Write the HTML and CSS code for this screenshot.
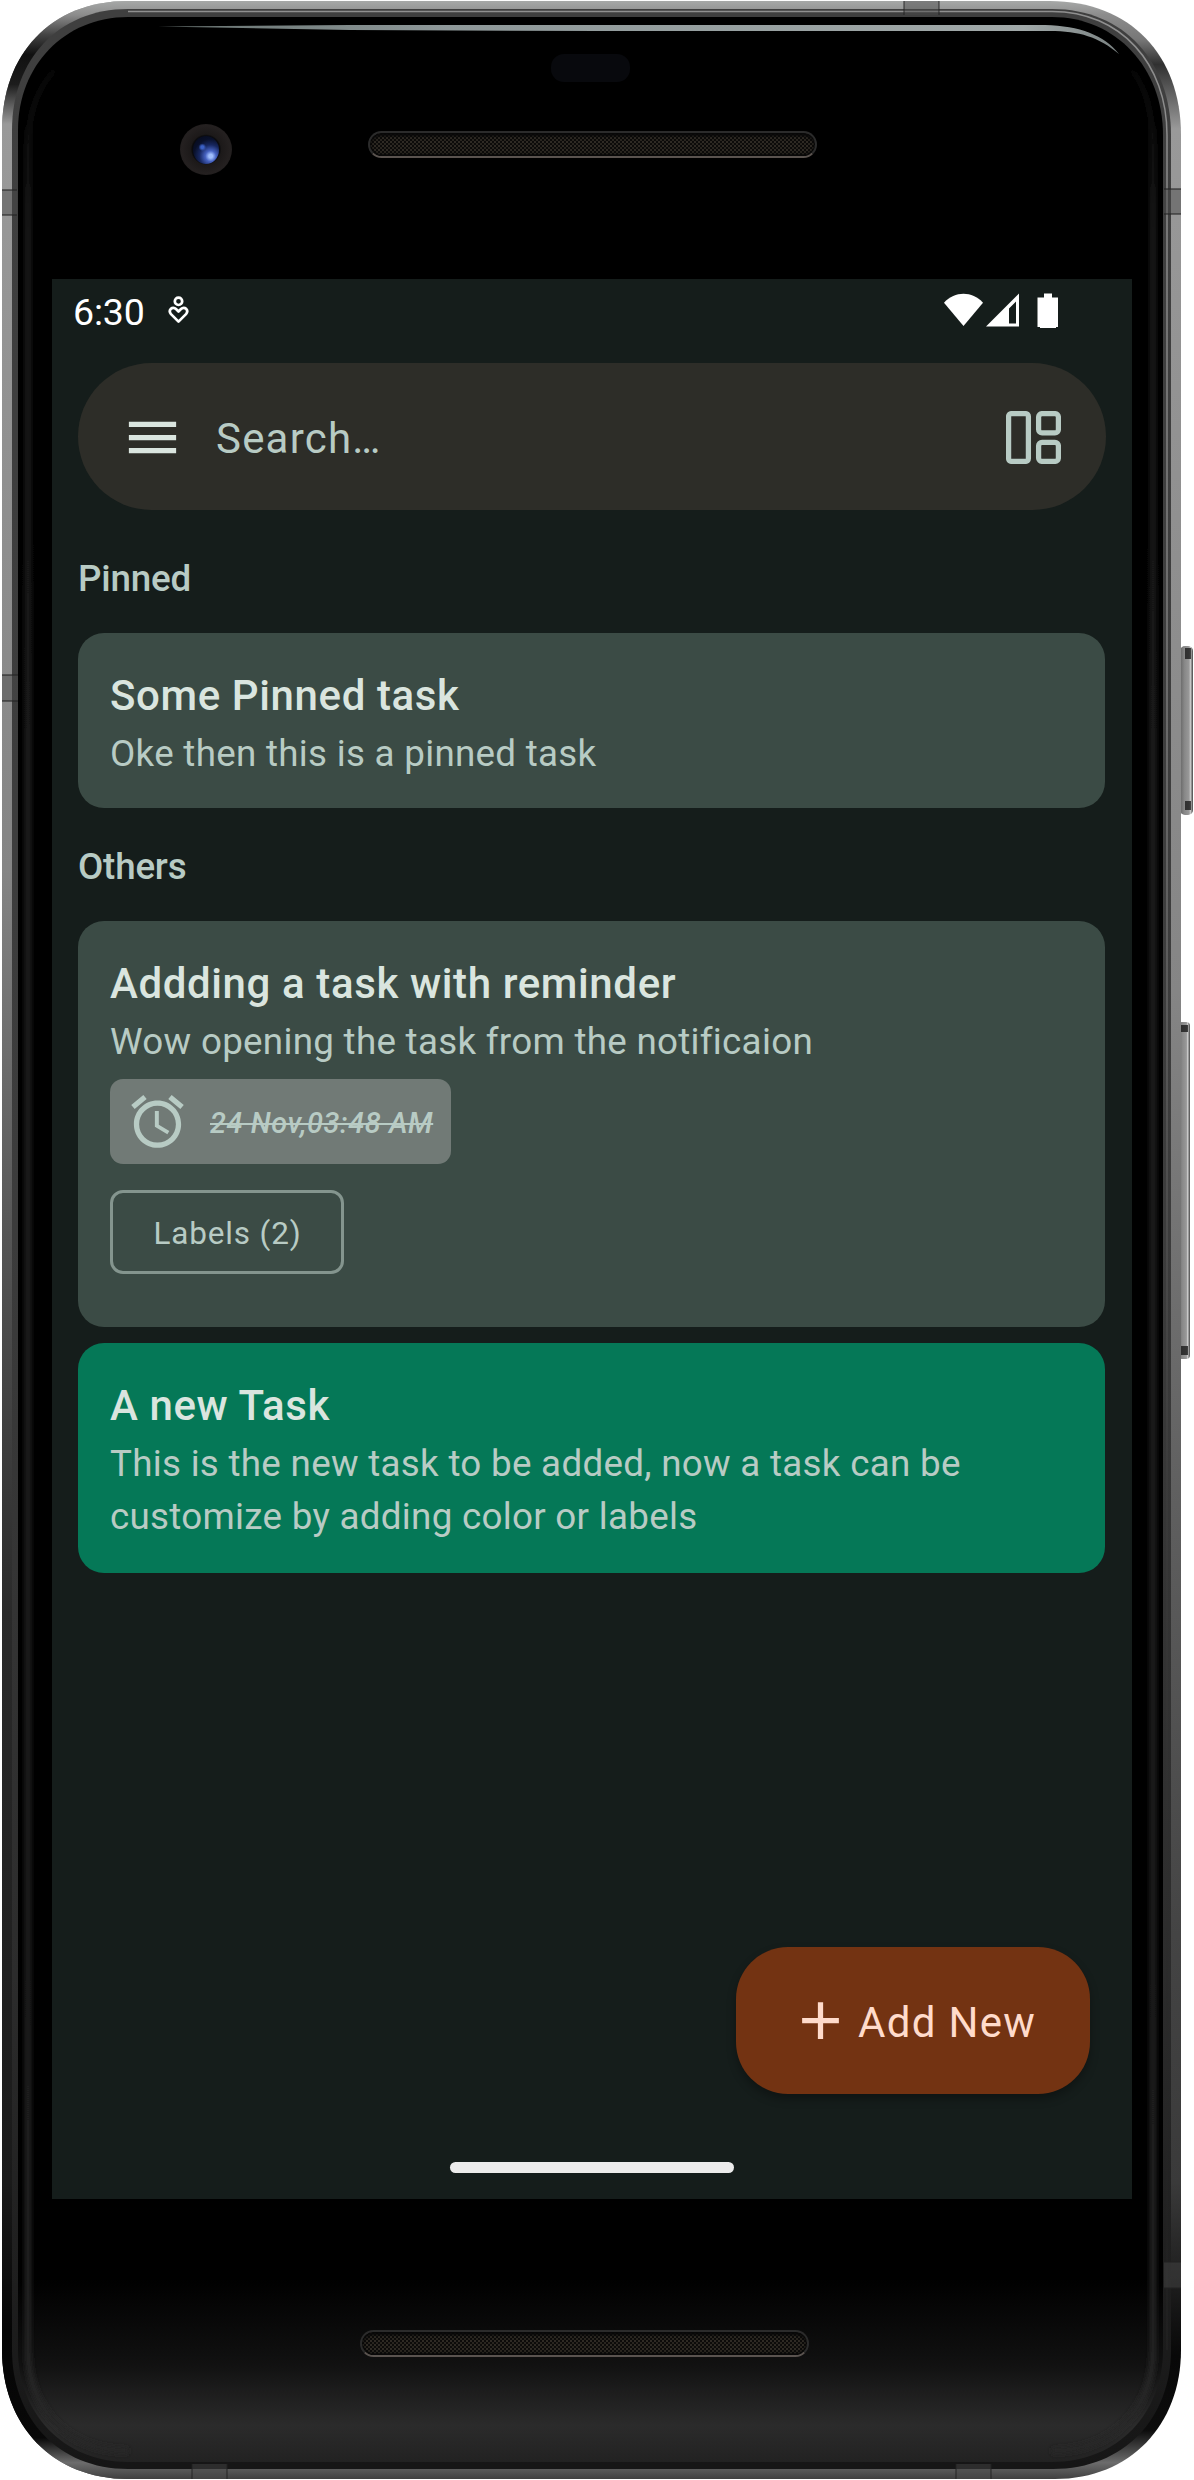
FILE: index.html
```html
<!DOCTYPE html>
<html lang="en">
<head>
<meta charset="utf-8">
<title>Tasks</title>
<link rel="stylesheet" href="styles.css">
</head>
<body>
<div class="device">
  <svg class="shell" viewBox="0 0 1194 2480" aria-hidden="true">
    <defs>
      <linearGradient id="metal" x1="0" y1="0" x2="0" y2="2480" gradientUnits="userSpaceOnUse">
        <stop offset="0" stop-color="#a8aaa9"/><stop offset=".006" stop-color="#8c8c8c"/>
        <stop offset=".016" stop-color="#777"/><stop offset=".026" stop-color="#303030"/>
        <stop offset=".036" stop-color="#5a5a5a"/><stop offset=".052" stop-color="#999"/>
        <stop offset=".4" stop-color="#858585"/><stop offset=".6" stop-color="#606060"/>
        <stop offset=".78" stop-color="#444"/><stop offset=".88" stop-color="#3a3a3a"/>
        <stop offset=".95" stop-color="#080808"/><stop offset=".98" stop-color="#0c0c0c"/>
        <stop offset=".993" stop-color="#6c6c6c"/><stop offset="1" stop-color="#3d3d3d"/>
      </linearGradient>
      <linearGradient id="metal-left" x1="0" y1="0" x2="0" y2="2480" gradientUnits="userSpaceOnUse">
        <stop offset="0" stop-color="#a8aaa9"/><stop offset=".006" stop-color="#8c8c8c"/>
        <stop offset=".014" stop-color="#444"/><stop offset=".022" stop-color="#101010"/>
        <stop offset=".034" stop-color="#1c1c1c"/><stop offset=".05" stop-color="#9a9a9a"/>
        <stop offset=".35" stop-color="#858585"/><stop offset=".5" stop-color="#555"/>
        <stop offset=".65" stop-color="#2a2a2a"/><stop offset=".88" stop-color="#1a1a1a"/>
        <stop offset=".94" stop-color="#050505"/><stop offset=".983" stop-color="#080808"/>
        <stop offset=".993" stop-color="#6c6c6c"/><stop offset="1" stop-color="#3d3d3d"/>
      </linearGradient>
      <linearGradient id="rim" x1="0" y1="14" x2="0" y2="2466" gradientUnits="userSpaceOnUse">
        <stop offset="0" stop-color="#3f3f3f"/><stop offset=".5" stop-color="#3c3c3c"/>
        <stop offset=".8" stop-color="#2c2c2c"/><stop offset="1" stop-color="#161616"/>
      </linearGradient>
      <linearGradient id="edge" x1="0" y1="0" x2="0" y2="2480" gradientUnits="userSpaceOnUse">
        <stop offset="0" stop-color="#909090"/><stop offset=".3" stop-color="#777"/>
        <stop offset=".6" stop-color="#3c3c3c"/><stop offset=".9" stop-color="#222"/>
      </linearGradient>
      <linearGradient id="glass" x1="0" y1="0" x2="0" y2="1">
        <stop offset="0" stop-color="#000"/><stop offset=".925" stop-color="#000"/>
        <stop offset=".96" stop-color="#111"/><stop offset=".985" stop-color="#2b2b2b"/><stop offset="1" stop-color="#222"/>
      </linearGradient>
      <linearGradient id="side" x1="0" y1="40" x2="0" y2="2470" gradientUnits="userSpaceOnUse">
        <stop offset="0" stop-color="#1e1e1e" stop-opacity="0"/><stop offset=".08" stop-color="#1e1e1e"/><stop offset="1" stop-color="#262626"/>
      </linearGradient>
      <linearGradient id="button" x1="0" y1="0" x2="1" y2="0">
        <stop offset="0" stop-color="#666"/><stop offset=".35" stop-color="#888"/><stop offset=".7" stop-color="#999"/><stop offset=".8" stop-color="#ccc"/><stop offset="1" stop-color="#444"/>
      </linearGradient>
      <linearGradient id="shine" x1="158" y1="0" x2="1120" y2="0" gradientUnits="userSpaceOnUse">
        <stop offset="0" stop-color="#66716f"/><stop offset=".3" stop-color="#8e9899"/><stop offset=".9" stop-color="#a0a8a8"/><stop offset="1" stop-color="#7a8282"/>
      </linearGradient>
      <filter id="soft" x="-5%" y="-5%" width="110%" height="110%"><feGaussianBlur stdDeviation="2.500"/></filter>
      <clipPath id="left-half"><rect width="597" height="2480"/></clipPath>
    </defs>
    <rect x="1180" y="646" width="13" height="169" rx="5" fill="url(#button)"/>
    <path d="M1185 648h6v11h-6zM1185 801h6v9h-6z" fill="#111" opacity=".75"/>
    <rect x="1178" y="1022" width="12" height="337" rx="4" fill="url(#button)"/>
    <path d="M1181 1025h7v7h-7zM1181 1346h7v9h-7z" fill="#111" opacity=".75"/>
    <path d="M128 1H1050C1130 1 1181 55 1181 135V2350C1181 2425 1130 2479 1055 2479H128C52 2479 2 2425 2 2350V130C2 55 50 1 128 1Z" fill="url(#metal)"/>
    <path clip-path="url(#left-half)" d="M128 1H1050C1130 1 1181 55 1181 135V2350C1181 2425 1130 2479 1055 2479H128C52 2479 2 2425 2 2350V130C2 55 50 1 128 1Z" fill="url(#metal-left)"/>
    <path d="M128 9H1052C1124 9 1171 62 1171 135V2350C1171 2418 1124 2469 1053 2469H128C58 2469 12 2418 12 2350V130C12 60 58 9 128 9Z" fill="url(#rim)"/>
    <path d="M128 11.500H1052C1121 11.500 1167 64 1167 135V2350" fill="none" stroke="url(#edge)" stroke-width="1.500"/>
    <g fill="#4a4a4a" fill-opacity=".45">
      <path d="M2 190H17V215H2ZM2 675H18V701H2ZM1164 189H1181V214H1164ZM1164 2262H1181V2288H1164ZM904 1H939V15H904ZM192 2464H227V2479H192ZM956 2464H991V2479H956Z"/>
    </g>
    <path d="M2 190H17M2 215H17M2 675H18M2 701H18M1164 189H1181M1164 214H1181M1164 2262H1181M1164 2288H1181M904 1V15M939 1V15M192 2464V2479M227 2464V2479M956 2464V2479M991 2464V2479" stroke="#222" stroke-opacity=".7" stroke-width="1.300"/>
    <path d="M128 17H1052C1116 17 1163 68 1163 135V2350C1163 2413 1118 2462 1052 2462H128C63 2462 18 2413 18 2350V130C18 66 64 17 128 17Z" fill="url(#glass)"/>
    <g fill="none" stroke="url(#side)" stroke-width="6" filter="url(#soft)">
      <path d="M80 50C48 70 28 96 28 150V2350C28 2408 66 2450 128 2451"/>
      <path d="M1112 50C1138 70 1153 96 1153 150V2350C1153 2408 1114 2450 1052 2451"/>
    </g>
    <path d="M158 26.500L350 25H1045C1080 26 1104 35 1119 54C1099 37 1079 31 1050 31H600L350 30Z" fill="url(#shine)"/>
  </svg>

  <header class="bezel bezel-top">
    <div class="sensor"></div>
    <div class="camera"><div class="lens"></div></div>
    <div class="speaker"></div>
  </header>

  <main class="screen">
    <div class="status">
      <span class="time">6:30</span>
      <svg class="notify" viewBox="0 0 21 28"><circle cx="10.500" cy="5.300" r="3.700"/><path d="M10.500 25.600L3 18.100C-.3 14.300 4.500 9.500 8 13L10.500 15.500L13 13C16.500 9.500 21.300 14.300 18 18.100Z"/></svg>
      <svg class="signals" viewBox="0 0 116 36">
        <path d="M1 9.700C12 -2.200 29 -2.200 40 9.700L20.500 33Z"/>
        <path fill-rule="evenodd" d="M43 33.500L76 0.500V33.500ZM66 12.500V30.500H73V8.500L66 15.500Z"/>
        <path d="M101 0.500H109V4.500H115V34H113V35H97V34H94.500V4.500H101Z"/>
      </svg>
    </div>

    <div class="search">
      <svg class="icon menu" viewBox="0 0 24 24"><path d="M3 18h18v-2H3v2zm0-5h18v-2H3v2zm0-7v2h18V6H3z"/></svg>
      <span class="placeholder">Search…</span>
      <svg class="layout" viewBox="0 0 55 53"><rect x="2.600" y="2.600" width="19.800" height="47.800" rx="2.800"/><rect x="32.600" y="2.600" width="19.800" height="19.300" rx="3.500"/><rect x="32.600" y="31.300" width="19.800" height="19.100" rx="3.500"/></svg>
    </div>

    <h2 class="section">Pinned</h2>
    <article class="card pinned">
      <h3>Some Pinned task</h3>
      <p>Oke then this is a pinned task</p>
    </article>

    <h2 class="section">Others</h2>
    <article class="card reminder">
      <h3>Addding a task with reminder</h3>
      <p>Wow opening the task from the notificaion</p>
      <div class="chip">
        <svg class="icon" viewBox="0 0 24 24"><path d="M22 5.720l-4.600-3.860-1.290 1.530 4.600 3.860L22 5.720zM7.880 3.390L6.600 1.860 2 5.710l1.290 1.530 4.590-3.850zM12.500 8H11v6l4.750 2.850.75-1.230-4-2.370V8zM12 4c-4.970 0-9 4.030-9 9s4.020 9 9 9c4.970 0 9-4.030 9-9s-4.030-9-9-9zm0 16c-3.870 0-7-3.130-7-7s3.130-7 7-7 7 3.130 7 7-3.130 7-7 7z"/></svg>
        <span>24 Nov,03:48 AM</span>
      </div>
      <div class="labels">Labels (2)</div>
    </article>
    <article class="card colored">
      <h3>A new Task</h3>
      <p>This is the new task to be added, now a task can be customize by adding color or labels</p>
    </article>

    <button class="fab"><svg class="icon" viewBox="0 0 24 24"><path d="M19 13h-6v6h-2v-6H5v-2h6V5h2v6h6v2z"/></svg><span>Add New</span></button>
    <div class="home"></div>
  </main>

  <footer class="bezel bezel-bottom"><div class="speaker"></div></footer>
</div>
</body>
</html>
```
FILE: styles.css
```css
* { box-sizing: border-box; }
body { margin: 0; background: #fff; font-family: Roboto, "Noto Sans", sans-serif; }
h2, h3, p { margin: 0; font-weight: 400; }
svg { display: block; flex: none; }

.device { position: relative; width: 1194px; height: 2480px; padding-left: 52px; overflow: hidden; }
.shell { position: absolute; left: 0; top: 0; width: 1194px; height: 2480px; }

.bezel { position: relative; width: 1080px; }
.bezel-top { height: 279px; display: grid; grid-template-columns: 127px 53px 1fr; grid-template-rows: 82px 41px 1fr; }
.sensor { grid-column: 1 / -1; grid-row: 1; align-self: end; margin-left: 499px; width: 79px; height: 28px; border-radius: 13px; background: #08090d; }
.camera { grid-column: 2; grid-row: 2 / 4; margin: 42px 0 0 1px; width: 52px; height: 51px; border-radius: 50%; background: radial-gradient(circle, #0b0b0d 38%, #1c1919 42%, #242020 66%, #151313); display: grid; place-items: center; }
.lens { width: 26px; height: 28px; border-radius: 50%; background: radial-gradient(circle at 36% 40%, #3b60c4 0 6%, transparent 16%), radial-gradient(circle at 68% 72%, #9fbdfb 0 7%, #4662c0 20%, #17275f 42%, #091029 64%, #050816); }
.speaker { width: 449px; height: 27px; border: 2px solid #2b2b2b; border-bottom-color: #5a534f; border-radius: 14px; background: radial-gradient(circle at 1px 1px, #4a4239 .4px, transparent 1.100px) 0 4px / 4px 4px, radial-gradient(circle at 3px 3px, #403930 .4px, transparent 1.100px) 0 4px / 4px 4px, #0c0b0a; box-shadow: inset 0 3px 3px #080808, inset 0 -2px 2px #080808; }
.bezel-top .speaker { grid-column: 3; grid-row: 3; margin: 8px 0 0 136px; }
.bezel-bottom { height: 281px; padding: 131px 0 0 308px; }

.screen { position: relative; width: 1080px; height: 1920px; background: #151d1b; padding: 0 26px; display: flex; flex-direction: column; align-items: flex-start; }
.status { width: 1028px; height: 84px; display: flex; align-items: flex-start; color: #fff; }
.time { width: 90px; margin-left: -5px; padding-top: 12px; font-size: 37.500px; line-height: 42px; letter-spacing: -.2px; }
.notify { width: 21px; height: 28px; margin: 17px 0 0 5px; fill: none; stroke: #fff; stroke-width: 2.700; stroke-linejoin: round; }
.signals { width: 116px; height: 36px; margin: 14px 47px 0 auto; fill: #fff; }

.search { width: 1028px; height: 147px; border-radius: 74px; background: #2d2d28; display: flex; align-items: center; padding: 2px 45px 0 43px; }
.icon { width: 63px; height: 63px; }
.menu { fill: #dae5df; }
.placeholder { margin: 2px 0 0 32px; font-size: 42px; line-height: 63px; letter-spacing: 1.200px; color: #b8cbc4; }
.layout { width: 55px; height: 53px; margin-left: auto; fill: none; stroke: #b8cbc4; stroke-width: 5.250; }

.section { font-size: 36.750px; font-weight: 500; line-height: 52px; letter-spacing: -.2px; color: #b8cbc4; }
.search + .section { margin: 43px 0 28px; }
.pinned + .section { margin: 33px 0 28px; }

.card { width: 1027px; padding: 31px 32px 0; border-radius: 26px; background: #3b4b45; color: #b8cbc4; }
.card h3 { font-size: 42px; font-weight: 500; line-height: 63px; letter-spacing: .610px; color: #dae5df; }
.card p { margin-top: 1px; font-size: 36.750px; line-height: 52.500px; letter-spacing: .290px; }
.pinned { height: 175px; }
.reminder { height: 406px; }
.colored { height: 230px; margin-top: 16px; background: #057857; }
.chip { width: 341px; height: 85px; margin-top: 10px; padding-left: 16px; border-radius: 13px; background: #717a76; display: flex; align-items: center; }
.chip .icon { fill: #b8cbc4; }
.chip span { margin: 3px 0 0 21px; font-size: 28.880px; font-weight: 500; font-style: italic; letter-spacing: .6px; text-decoration: line-through; text-decoration-thickness: 2px; white-space: nowrap; }
.labels { width: 234px; height: 84px; margin-top: 26px; border: 3px solid #84958e; border-radius: 13px; font-size: 31.500px; line-height: 82px; letter-spacing: .850px; text-indent: 1px; text-align: center; }

.fab { position: absolute; left: 684px; top: 1668px; width: 354px; height: 147px; padding: 0 0 0 53px; border: 0; border-radius: 52px; background: #733312; color: #ffdbcb; display: flex; align-items: center; font: 400 42px/63px Roboto, sans-serif; letter-spacing: 1.310px; box-shadow: 0 5px 10px rgba(0,0,0,.3); }
.fab .icon { fill: #ffdbcb; }
.fab span { margin: 3px 0 0 6px; }
.home { position: absolute; left: 398px; top: 1883px; width: 284px; height: 11px; border-radius: 6px; background: #ececec; }
```
